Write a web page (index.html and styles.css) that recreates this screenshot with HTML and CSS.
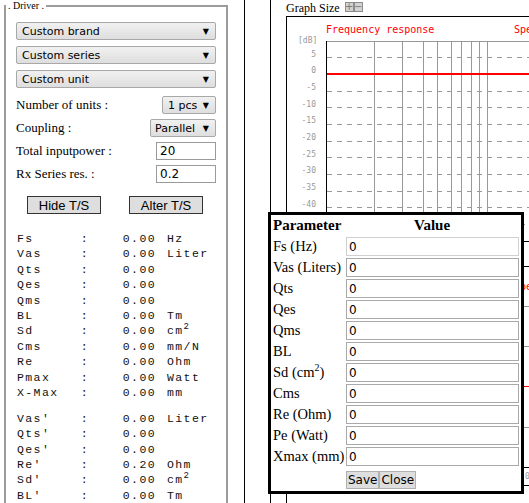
FILE: index.html
```html
<!DOCTYPE html>
<html>
<head>
<meta charset="utf-8">
<link rel="stylesheet" href="styles.css">
</head>
<body>
<div class="page">
  <div class="left">
    <fieldset class="driver">
      <legend>. Driver .</legend>
      <div class="sel wide">Custom brand<span class="arr">▼</span></div>
      <div class="sel wide">Custom series<span class="arr">▼</span></div>
      <div class="sel wide">Custom unit<span class="arr">▼</span></div>
      <div class="frow first"><span>Number of units :</span><div class="sel pcs">1 pcs<span class="arr">▼</span></div></div>
      <div class="frow"><span>Coupling :</span><div class="sel par">Parallel<span class="arr">▼</span></div></div>
      <div class="frow"><span>Total inputpower :</span><input class="tin" type="text" value="20"></div>
      <div class="frow"><span>Rx Series res. :</span><input class="tin" type="text" value="0.2"></div>
      <div class="btns"><button class="tsbtn">Hide T/S</button><button class="tsbtn">Alter T/S</button></div>
      <div class="ts">
        <div class="r"><span>Fs</span><span class="c">:</span><span class="v">0.00</span><span class="u">Hz</span></div>
        <div class="r"><span>Vas</span><span class="c">:</span><span class="v">0.00</span><span class="u">Liter</span></div>
        <div class="r"><span>Qts</span><span class="c">:</span><span class="v">0.00</span><span class="u"></span></div>
        <div class="r"><span>Qes</span><span class="c">:</span><span class="v">0.00</span><span class="u"></span></div>
        <div class="r"><span>Qms</span><span class="c">:</span><span class="v">0.00</span><span class="u"></span></div>
        <div class="r"><span>BL</span><span class="c">:</span><span class="v">0.00</span><span class="u">Tm</span></div>
        <div class="r"><span>Sd</span><span class="c">:</span><span class="v">0.00</span><span class="u">cm<sup>2</sup></span></div>
        <div class="r"><span>Cms</span><span class="c">:</span><span class="v">0.00</span><span class="u">mm/N</span></div>
        <div class="r"><span>Re</span><span class="c">:</span><span class="v">0.00</span><span class="u">Ohm</span></div>
        <div class="r"><span>Pmax</span><span class="c">:</span><span class="v">0.00</span><span class="u">Watt</span></div>
        <div class="r"><span>X-Max</span><span class="c">:</span><span class="v">0.00</span><span class="u">mm</span></div>
        <div class="sp"></div>
        <div class="r"><span>Vas'</span><span class="c">:</span><span class="v">0.00</span><span class="u">Liter</span></div>
        <div class="r"><span>Qts'</span><span class="c">:</span><span class="v">0.00</span><span class="u"></span></div>
        <div class="r"><span>Qes'</span><span class="c">:</span><span class="v">0.00</span><span class="u"></span></div>
        <div class="r"><span>Re'</span><span class="c">:</span><span class="v">0.20</span><span class="u">Ohm</span></div>
        <div class="r"><span>Sd'</span><span class="c">:</span><span class="v">0.00</span><span class="u">cm<sup>2</sup></span></div>
        <div class="r"><span>BL'</span><span class="c">:</span><span class="v">0.00</span><span class="u">Tm</span></div>
      </div>
    </fieldset>
  </div>
  <div class="mid"></div>
  <div class="right">
    <div class="gs"><span class="gst">Graph Size</span><span class="gb">+</span><span class="gb">−</span></div>
    <div class="graph">
      <svg class="plot" width="243" height="487" viewBox="287 17 243 487">
        <g font-family="DejaVu Sans Mono, monospace">
          <text x="326" y="33" font-size="10" fill="#f00">Frequency response</text>
          <text x="514" y="33" font-size="10" fill="#f00">Spe</text>
          <text x="298" y="43" font-size="8" fill="#999">[dB]</text>
          <g font-size="8" fill="#999" text-anchor="end">
            <text x="316" y="56.5">5</text>
            <text x="316" y="73">0</text>
            <text x="316" y="90">-5</text>
            <text x="316" y="106.5">-10</text>
            <text x="316" y="123">-15</text>
            <text x="316" y="140">-20</text>
            <text x="316" y="156.5">-25</text>
            <text x="316" y="173">-30</text>
            <text x="316" y="190">-35</text>
            <text x="316" y="206.5">-40</text>
          </g>
        </g>
        <g stroke="#999" stroke-width="1" fill="none">
          <path d="M326 41.5H530"/>
          <path d="M374.5 41V230M402.5 41V230M423.5 41V230M437.5 41V230M451.5 41V230M461.5 41V230M471.5 41V230M479.5 41V230M487.5 41V230"/>
        </g>
        <g stroke="#999" stroke-width="1" stroke-dasharray="5 5" fill="none">
          <path d="M327 57.5H530M327 91.5H530M327 107.5H530M327 124.5H530M327 141.5H530M327 157.5H530M327 174.5H530M327 191.5H530M327 207.5H530M520 224.5H530"/>
        </g>
        <path d="M327 74H530" stroke="#f00" stroke-width="2"/>
        <path d="M326.5 41V230" stroke="#000" stroke-width="1"/>
        <g stroke-width="1" fill="none">
          <path d="M520 241.5H530M520 266.5H530M520 467.5H530M520 485.5H530" stroke="#000"/>
          <path d="M520 306.5H530" stroke="#999"/>
          <path d="M520 346.5H530M520 427.5H530" stroke="#999"/>
          <path d="M520 386.5H530" stroke="#f00"/>
        </g>
        <text x="514" y="290" font-size="10" fill="#f00" font-family="DejaVu Sans Mono, monospace">Spe</text>
        <text x="525" y="479" font-size="8" fill="#999" font-family="DejaVu Sans Mono, monospace">0</text>
      </svg>
    </div>
  </div>
  <div class="popup">
    <table class="ptab">
      <tr><th class="lab">Parameter</th><th class="val">Value</th></tr>
      <tr><td class="lab">Fs (Hz)</td><td class="val"><input class="pin focus" type="text" value="0"></td></tr>
      <tr><td class="lab">Vas (Liters)</td><td class="val"><input class="pin" type="text" value="0"></td></tr>
      <tr><td class="lab">Qts</td><td class="val"><input class="pin" type="text" value="0"></td></tr>
      <tr><td class="lab">Qes</td><td class="val"><input class="pin" type="text" value="0"></td></tr>
      <tr><td class="lab">Qms</td><td class="val"><input class="pin" type="text" value="0"></td></tr>
      <tr><td class="lab">BL</td><td class="val"><input class="pin" type="text" value="0"></td></tr>
      <tr><td class="lab">Sd (cm<sup>2</sup>)</td><td class="val"><input class="pin" type="text" value="0"></td></tr>
      <tr><td class="lab">Cms</td><td class="val"><input class="pin" type="text" value="0"></td></tr>
      <tr><td class="lab">Re (Ohm)</td><td class="val"><input class="pin" type="text" value="0"></td></tr>
      <tr><td class="lab">Pe (Watt)</td><td class="val"><input class="pin" type="text" value="0"></td></tr>
      <tr><td class="lab">Xmax (mm)</td><td class="val"><input class="pin" type="text" value="0"></td></tr>
      <tr><td class="lab"></td><td class="val"><div class="btnrow"><button class="pbtn">Save</button><button class="pbtn">Close</button></div></td></tr>
    </table>
  </div>
</div>
</body>
</html>
```
FILE: styles.css
```css
html, body {
  margin: 0;
  padding: 0;
  overflow: hidden;
  background: #fff;
}
body {
  width: 529px;
  height: 503px;
  font-family: "Liberation Serif", serif;
  color: #000;
}
.page {
  display: flex;
  height: 503px;
  position: relative;
}
.left {
  width: 244px;
  flex: none;
}
.mid {
  width: 25px;
  flex: none;
  border-left: 1px solid #000;
}
.right {
  flex: 1;
  min-width: 0;
  border-left: 1px solid #000;
  padding-left: 15px;
}

/* Driver fieldset */
.driver {
  margin: 0 0 0 4px;
  width: 224px;
  height: 560px;
  box-sizing: border-box;
  border: 2px solid #9c9c9c;
  padding: 10px 10px 0;
  min-inline-size: auto;
}
.driver legend {
  font-size: 10px;
  line-height: 12px;
  padding: 0 2px;
  margin-left: -10px;
}
.sel {
  height: 18px;
  box-sizing: border-box;
  border: 1px solid #a8a8a8;
  border-radius: 2px;
  background: linear-gradient(#f1f1f1, #dedede);
  font: 11px "DejaVu Sans", sans-serif;
  display: flex;
  align-items: center;
  justify-content: space-between;
  padding: 0 6px 0 5px;
}
.sel.wide + .sel.wide {
  margin-top: 6px;
}
.sel .arr {
  font-size: 8px;
}
.sel.pcs {
  width: 54px;
}
.sel.par {
  width: 66px;
  padding-left: 4px;
}
.frow {
  display: flex;
  justify-content: space-between;
  align-items: center;
  height: 18px;
  margin-top: 5px;
  font-size: 13px;
}
.frow.first {
  margin-top: 8px;
}
.tin {
  width: 60px;
  height: 18px;
  box-sizing: border-box;
  border: 1px solid #9a9a9a;
  margin: 0;
  padding: 0 3px;
  font: 12px "DejaVu Sans", sans-serif;
  color: #000;
}
.btns {
  display: flex;
  justify-content: center;
  gap: 28px;
  margin-top: 13px;
  padding-right: 2px;
}
.tsbtn {
  width: 74px;
  height: 18px;
  box-sizing: border-box;
  border: 1px solid #333;
  background: #dedede;
  padding: 0;
  margin: 0;
  font: 13px "Liberation Sans", sans-serif;
  color: #000;
}

/* T/S readout */
.ts {
  margin-top: 17px;
  padding-left: 1px;
  font: 11.5px "Liberation Mono", monospace;
  letter-spacing: 1.4px;
  color: #111;
}
.ts .r {
  display: grid;
  grid-template-columns: 61px 14px 64px 1fr;
  height: 15.4px;
  line-height: 15.4px;
  white-space: nowrap;
}
.ts .c {
  text-align: center;
}
.ts .v {
  text-align: right;
}
.ts .u {
  padding-left: 11px;
}
.ts sup {
  font-size: 9px;
  line-height: 0;
  vertical-align: 5px;
  letter-spacing: 0;
}
.ts .sp {
  height: 10.6px;
}

/* Graph */
.gs {
  height: 16px;
  display: flex;
  align-items: center;
  font-size: 12px;
  white-space: nowrap;
}
.gst {
  margin-right: 5px;
}
.gb {
  display: inline-flex;
  align-items: center;
  justify-content: center;
  width: 9px;
  height: 10px;
  margin-top: -2px;
  box-sizing: border-box;
  border: 1px solid #8c8c8c;
  background: #d2d2d2;
  color: #7a7a7a;
  font: 10px "DejaVu Sans", sans-serif;
  line-height: 1;
}
.graph {
  width: 300px;
  height: 600px;
  border: 1px solid #000;
  border-right: none;
}
.plot {
  display: block;
}

/* Popup */
.popup {
  position: absolute;
  left: 268px;
  top: 212px;
  width: 256px;
  height: 282px;
  box-sizing: border-box;
  border: 3px solid #000;
  background: #fff;
}
.ptab {
  border-collapse: collapse;
  font-size: 14.5px;
}
.ptab td, .ptab th {
  padding: 0;
  height: 21px;
  white-space: nowrap;
  vertical-align: middle;
}
.ptab .lab {
  width: 72px;
  padding-left: 2px;
  text-align: left;
}
.ptab th {
  font-size: 15px;
  font-weight: bold;
}
.ptab th.val {
  text-align: center;
}
.ptab td.val {
  padding-left: 1px;
}
.ptab sup {
  line-height: 0;
  font-size: 10px;
}
.pin {
  display: block;
  width: 173px;
  height: 19px;
  box-sizing: border-box;
  margin: 0;
  border: 1px solid #a9a9a9;
  padding: 0 2px;
  font: 12px "DejaVu Sans", sans-serif;
  color: #000;
}
.pin.focus {
  border-color: #d0d0d0;
}
.btnrow {
  display: flex;
  padding-top: 4px;
}
.pbtn {
  height: 18px;
  margin: 0;
  padding: 0 1px;
  border: 1px solid #b0b0b0;
  background: #dedede;
  font: 12px "DejaVu Sans", sans-serif;
  color: #000;
}
```
